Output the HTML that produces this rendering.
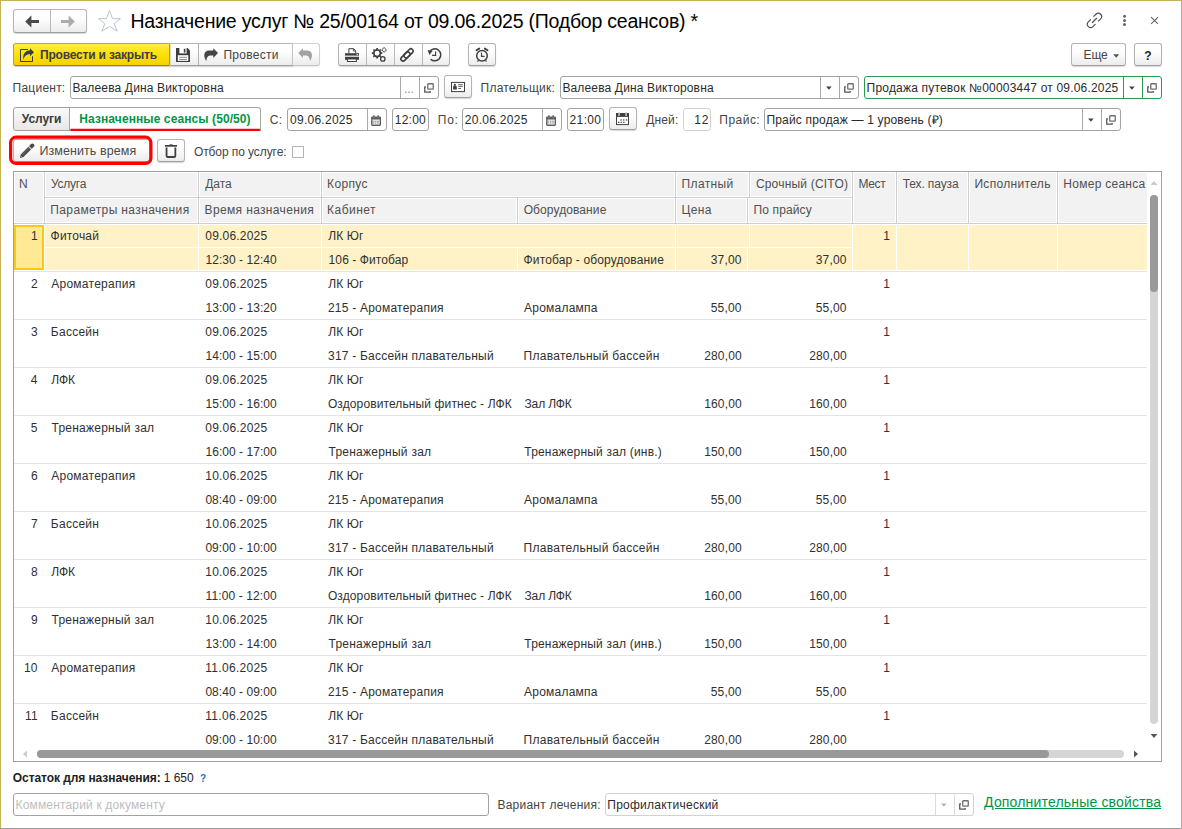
<!DOCTYPE html>
<html lang="ru"><head><meta charset="utf-8"><title>Назначение услуг</title>
<style>
html,body{margin:0;padding:0}
body{width:1182px;height:829px;overflow:hidden;background:#fff;font-family:"Liberation Sans",sans-serif;font-size:12px;color:#333}
#win{position:absolute;left:0;top:0;width:1182px;height:829px;overflow:hidden;background:#fff}
#win div,#win span,#win a,#win svg{position:absolute;box-sizing:border-box}
.t{white-space:nowrap;line-height:14px;height:14px}
.edge{background:#c4b35a}
.btn{border:1px solid #b4b4b4;border-bottom-color:#9f9f9f;border-radius:3px;background:linear-gradient(#ffffff 0%,#fdfdfd 40%,#ececec 100%);box-shadow:0 1px 1px rgba(0,0,0,.16)}
.btn .dv{top:0;width:1px;height:100%;background:#b9b9b9}
.inp{border:1px solid #a3a3a3;border-radius:3px;background:#fff;height:23px}
.inp .dv{top:0;width:1px;height:21px;background:#a9a9a9}
.inp .t{color:#2b2b2b}
.inp.ro{border-color:#d2d2d2}
.inp.gr{border-color:#2a9a4f}
.inp.gr .dv{background:#2a9a4f}
.lbl{color:#444}
#grid{left:13px;top:171px;width:1149px;height:591px;border:1px solid #a0a0a0;background:#fff;overflow:hidden}
.hc{background:#f2f2f2}
.hl{background:#cfcfcf}
.row{left:0;width:1133px;height:48px;border-bottom:1px solid #e4e4e4}
.row .sb{background:#fff2c6}

</style></head>
<body>
<div id="win">
<!-- window edges -->
<div class="edge" style="left:0;top:0;width:1182px;height:1px"></div>
<div class="edge" style="left:0;top:0;width:1px;height:829px"></div>
<div class="edge" style="left:1181px;top:0;width:1px;height:829px"></div>
<div style="left:0;top:828px;width:1181px;height:1px;background:#9a9a9a"></div>

<!-- header: navigation, title, window icons -->
<div class="btn" style="left:13px;top:9px;width:74px;height:24px">
  <div class="dv" style="left:36px"></div>
  <svg style="left:10px;top:5px" width="16" height="13" viewBox="24 15 16 13"><path d="M25.2 21.5 L31.4 15.6 V20 H39 V23 H31.4 V27.4 Z" fill="#4a4a4a"/></svg><svg style="left:46px;top:5px" width="16" height="13" viewBox="60 15 16 13"><path d="M74.8 21.5 L68.6 15.6 V20 H61 V23 H68.6 V27.4 Z" fill="#ababab"/></svg>
</div>
<svg style="left:96px;top:8px" width="27" height="26" viewBox="96 8 27 26"><path d="M109.5 10.6 L112.5 18.6 L120.4 18.7 L114.2 23.7 L117.2 31.2 L109.5 26.5 L101.8 31.2 L104.8 23.7 L98.6 18.7 L106.5 18.6 Z" fill="#fff" stroke="#bcc4cc" stroke-width="1" stroke-linejoin="miter"/></svg>
<span class="t" style="left:130.40px;top:10px;letter-spacing:-0.225px;line-height:23px;height:23px;font-size:19.5px;color:#000">Назначение услуг № 25/00164 от 09.06.2025 (Подбор сеансов) *</span>
<svg style="left:1084px;top:10px" width="22" height="22" viewBox="1084 10 22 22"><g transform="translate(1094.5 20.4) rotate(-45)" fill="none" stroke="#4d4d4d" stroke-width="1.15" stroke-linecap="round"><path d="M2.3 -3.3 H5.4 A3.3 3.3 0 0 1 5.4 3.3 H2.3"/><path d="M-2.3 -3.3 H-5.4 A3.3 3.3 0 0 0 -5.4 3.3 H-2.3"/><path d="M-3 0 H3"/></g></svg><svg style="left:1121px;top:13px" width="8" height="15" viewBox="1121 13 8 15"><circle cx="1124.5" cy="16.3" r="1.5" fill="#666"/><circle cx="1124.5" cy="20.45" r="1.5" fill="#666"/><circle cx="1124.5" cy="24.6" r="1.5" fill="#666"/></svg><svg style="left:1149px;top:15px" width="12" height="12" viewBox="1149 15 12 12"><path d="M1151.1 17.1 L1158 24 M1158 17.1 L1151.1 24" stroke="#555" stroke-width="1.05" fill="none"/></svg>

<!-- command bar -->
<div id="ybtn" style="left:13px;top:43px;width:157px;height:23px;border:1px solid #bfa700;border-top-color:#c4ad00;border-bottom-color:#9c8500;border-radius:3px 0 0 3px;background:linear-gradient(#ffee4a 0%,#ffe30c 40%,#f3d200 100%);box-shadow:0 1px 1px rgba(0,0,0,.2)">
  <svg style="left:5px;top:3px" width="17" height="17" viewBox="19 47 17 17"><path d="M28 49.5 H20.5 V61.5 H32.5 V56.2" fill="none" stroke="#3b3e4a" stroke-width="1"/><path d="M30 48.2 L34 52.2 L30 56.3 V54.1 C26.5 54.2 24.3 56 23.2 59.7 C22.9 53.5 25.5 50.4 30 50.3 Z" fill="#3b3e4a"/></svg>
  <span class="t" style="left:26.00px;top:4px;letter-spacing:-0.188px;font-weight:bold;color:#3c3d45">Провести и закрыть</span>
</div>
<div class="btn" style="left:170px;top:43px;width:123px;height:23px;border-radius:0;border-color:#b4b4b4;border-bottom-color:#9f9f9f;border-left-color:#d8d8d8;border-right-color:#c4c4c4">
  <div class="dv" style="left:27px;background:#b4b4b4"></div>
  <svg style="left:4px;top:3px" width="16" height="16" viewBox="175 47 16 16"><path d="M176 48 H187.6 L190 50.4 V62 H176 Z" fill="#3d3d3d"/><rect x="179.4" y="48" width="7.2" height="5.4" fill="#fff"/><rect x="183.8" y="48.8" width="1.3" height="3.8" fill="#3d3d3d"/><rect x="185.1" y="48.8" width="1.4" height="3.8" fill="#a9a9a9"/><rect x="177.8" y="55.2" width="10.5" height="5.7" fill="#fff"/><rect x="179.2" y="56.8" width="7.8" height="1" fill="#8c8c8c"/><rect x="179.2" y="59" width="7.8" height="1" fill="#8c8c8c"/></svg><svg style="left:32px;top:3px" width="16" height="15" viewBox="203 47 16 15"><path d="M213.3 48.3 L218 53.1 L213.3 58 V55.6 H210.6 C208 55.6 206.6 57.4 206.3 60.9 C203.4 57 203.2 50.8 209 50.6 H213.3 Z" fill="#454545"/></svg>
  <span class="t" style="left:52.40px;top:4px;letter-spacing:0.300px;color:#444">Провести</span>
</div>
<div class="btn" style="left:292px;top:43px;width:28px;height:23px;border-radius:0 3px 3px 0;border-color:#d0d0d0;border-bottom-color:#c4c4c4;border-left-color:#c4c4c4;box-shadow:0 1px 1px rgba(0,0,0,.08)">
  <svg style="left:4px;top:3px" width="16" height="15" viewBox="297 47 16 15"><path d="M303 48.3 L298.3 53.1 L303 58 V55.6 H305.7 C308.3 55.6 309.7 57.4 310 60.9 C312.9 57 313.1 50.8 307.3 50.6 H303 Z" fill="#a2a2a2"/></svg>
</div>
<div class="btn" style="left:338px;top:43px;width:112px;height:23px">
  <div class="dv" style="left:27px"></div><div class="dv" style="left:55px"></div><div class="dv" style="left:83px"></div>
  <svg style="left:5px;top:3px" width="16" height="16" viewBox="344 47 16 16"><path d="M348.9 53.4 V48.7 H353.6 L355.7 50.8 V53.4" fill="#fff" stroke="#404040" stroke-width="1"/><path d="M353.4 48.8 V51 H355.6" fill="none" stroke="#404040" stroke-width="0.9"/><rect x="345" y="53.2" width="14" height="2.4" fill="#404040"/><rect x="356.7" y="54" width="1.1" height="1" fill="#fff"/><rect x="345" y="56.8" width="14" height="3" fill="#404040"/><rect x="347.4" y="59" width="9" height="2.5" fill="#fff" stroke="#404040" stroke-width="1"/></svg><svg style="left:32px;top:3px" width="16" height="16" viewBox="371 47 16 16"><circle cx="377.1" cy="53.2" r="3.3" fill="none" stroke="#404040" stroke-width="1.7"/><g stroke="#404040" stroke-width="1.7"><path d="M377.1 48 V49.4 M377.1 57 V58.4 M371.9 53.2 H373.3 M380.9 53.2 H382.3 M373.4 49.5 L374.4 50.5 M379.8 55.9 L380.8 56.9 M373.4 56.9 L374.4 55.9 M379.8 50.5 L380.8 49.5"/></g><path d="M384.1 47.5 L386.5 49.9 L384.1 52.3 L381.7 49.9 Z" fill="#fff" stroke="#404040" stroke-width="1"/><circle cx="382.8" cy="58.9" r="2.2" fill="none" stroke="#404040" stroke-width="1.3"/></svg><svg style="left:60px;top:3px" width="16" height="16" viewBox="399 47 16 16"><g fill="none" stroke="#404040" stroke-width="1.6"><rect x="-5.5" y="-2.2" width="11" height="4.4" rx="2.2" transform="translate(408.55 53.35) rotate(-45)"/><rect x="-5.5" y="-2.2" width="11" height="4.4" rx="2.2" transform="translate(405.45 56.55) rotate(-45)"/></g></svg><svg style="left:88px;top:3px" width="16" height="16" viewBox="427 47 16 16"><path d="M429.7 51.6 A6 6 0 1 1 430.6 59.2" fill="none" stroke="#404040" stroke-width="1.5"/><path d="M427.7 50 L432.6 50.9 L429.3 55 Z" fill="#404040"/><path d="M435.6 51.5 V55.4 H432.1" fill="none" stroke="#404040" stroke-width="1.2"/></svg>
</div>
<div class="btn" style="left:468px;top:43px;width:28px;height:23px"><svg style="left:5px;top:3px" width="16" height="16" viewBox="474 47 16 16"><circle cx="482" cy="55.8" r="5.3" fill="none" stroke="#404040" stroke-width="1.5"/><path d="M481.5 52.6 V56.3 H484.6" fill="none" stroke="#404040" stroke-width="1.15"/><path d="M476.5 50.3 L479.2 48.6 M487.5 50.3 L484.8 48.6" stroke="#404040" stroke-width="1.9" stroke-linecap="round"/><path d="M478.6 60.2 L477.5 61.6 M485.4 60.2 L486.5 61.6" stroke="#404040" stroke-width="1.2"/></svg></div>
<div class="btn" style="left:1071px;top:43px;width:55px;height:23px">
  <span class="t" style="left:11.60px;top:4px;letter-spacing:-0.200px;color:#444">Еще</span>
  <svg style="left:41px;top:10px" width="7" height="4" viewBox="0 0 7 4"><path d="M0.2 0.3 H6.2 L3.2 3.8 Z" fill="#555"/></svg>
</div>
<div class="btn" style="left:1134px;top:43px;width:28px;height:23px">
  <span class="t" style="left:9.30px;top:5px;font-weight:bold;font-size:12px;color:#222">?</span>
</div>

<!-- row 3 -->
<span class="t" style="left:12.60px;top:81px;letter-spacing:0.229px;color:#444">Пациент:</span>
<div class="inp" style="left:70px;top:76px;width:369px">
  <span class="t" style="left:1.40px;top:4px;letter-spacing:0.150px;">Валеева Дина Викторовна</span>
  <div class="dv" style="left:329px"></div><div class="dv" style="left:348px"></div>
  <span class="t" style="left:333px;top:5px;color:#8a8a8a">...</span>
  <svg style="left:353px;top:6px" width="10" height="10" viewBox="0 0 10 10"><path d="M2 3.8 H0.75 V9.2 H6.2 V8" fill="none" stroke="#555" stroke-width="1.3" stroke-linejoin="round"/><rect x="3.75" y="0.75" width="5.5" height="5.3" rx="0.6" fill="#fff" stroke="#6e6e6e" stroke-width="1.3"/></svg>
</div>
<div class="btn" style="left:444px;top:75px;width:28px;height:23px"><svg style="left:5px;top:5px" width="16" height="12" viewBox="450 81 16 12"><rect x="451.5" y="82.4" width="13" height="9.2" fill="#fff" stroke="#404040" stroke-width="1"/><rect x="453.9" y="83.9" width="1.9" height="1.6" fill="#404040"/><path d="M453.1 89.5 V86.6 L453.9 85.4 H455.8 L456.8 86.6 V89.5 Z" fill="#404040"/><path d="M458.2 84.7 H462.8 M458.2 86.4 H462.8 M458.2 88.5 H461" stroke="#555" stroke-width="0.9"/></svg></div>
<span class="t" style="left:480.60px;top:81px;letter-spacing:0.210px;color:#444">Плательщик:</span>
<div class="inp" style="left:560px;top:76px;width:299px">
  <span class="t" style="left:1.40px;top:4px;letter-spacing:0.150px;">Валеева Дина Викторовна</span>
  <div class="dv" style="left:259px"></div><div class="dv" style="left:278px"></div>
  <svg style="left:265px;top:9px" width="6" height="4" viewBox="0 0 6 4"><path d="M0.1 0.4 H5.7 L2.9 3.7 Z" fill="#444"/></svg><svg style="left:283px;top:6px" width="10" height="10" viewBox="0 0 10 10"><path d="M2 3.8 H0.75 V9.2 H6.2 V8" fill="none" stroke="#555" stroke-width="1.3" stroke-linejoin="round"/><rect x="3.75" y="0.75" width="5.5" height="5.3" rx="0.6" fill="#fff" stroke="#6e6e6e" stroke-width="1.3"/></svg>
</div>
<div class="inp gr" style="left:864px;top:76px;width:298px">
  <span class="t" style="left:1.60px;top:4px;letter-spacing:0.192px;">Продажа путевок №00003447 от 09.06.2025</span>
  <div class="dv" style="left:258px"></div><div class="dv" style="left:277px"></div>
  <svg style="left:264px;top:9px" width="6" height="4" viewBox="0 0 6 4"><path d="M0.1 0.4 H5.7 L2.9 3.7 Z" fill="#444"/></svg><svg style="left:282px;top:6px" width="10" height="10" viewBox="0 0 10 10"><path d="M2 3.8 H0.75 V9.2 H6.2 V8" fill="none" stroke="#555" stroke-width="1.3" stroke-linejoin="round"/><rect x="3.75" y="0.75" width="5.5" height="5.3" rx="0.6" fill="#fff" stroke="#6e6e6e" stroke-width="1.3"/></svg>
</div>

<!-- row 4 -->
<div class="btn" style="left:13px;top:107px;width:57px;height:24px;border-radius:3px 0 0 3px;border-color:#9f9f9f;background:linear-gradient(#fafafa,#e8e8e8);box-shadow:none">
  <span class="t" style="left:7.80px;top:4px;letter-spacing:-0.080px;font-weight:bold;color:#3a3a3a">Услуги</span>
</div>
<div style="left:69px;top:107px;width:192px;height:24px;border:1px solid #a6a6a6;border-bottom:none;border-radius:0 3px 0 0;background:#fff">
  <span class="t" style="left:9.30px;top:4px;letter-spacing:0.092px;font-weight:bold;color:#009646">Назначенные сеансы (50/50)</span>
</div>
<svg style="left:68px;top:127px" width="196" height="6" viewBox="68 127 196 6"><path d="M71.2 129.9 H259.2" stroke="#ff0000" stroke-width="2.2" stroke-linecap="round" fill="none"/></svg>
<span class="t" style="left:269.70px;top:113px;letter-spacing:0.400px;color:#444">С:</span>
<div class="inp" style="left:287px;top:108px;width:100px">
  <span class="t" style="left:2.00px;top:4px;letter-spacing:0.267px;">09.06.2025</span>
  <div class="dv" style="left:79px"></div>
  <svg style="left:83px;top:6px" width="10" height="11" viewBox="0 0 10 11"><rect x="0.1" y="1.4" width="9.9" height="9.5" rx="1.3" fill="#5c5c5c"/><rect x="2.1" y="0.2" width="1.7" height="2.6" rx="0.7" fill="#5c5c5c"/><rect x="6.3" y="0.2" width="1.7" height="2.6" rx="0.7" fill="#5c5c5c"/><rect x="2.5" y="1.6" width="0.9" height="1.6" fill="#9a9a9a"/><rect x="6.7" y="1.6" width="0.9" height="1.6" fill="#9a9a9a"/><rect x="1.4" y="4.5" width="7.3" height="5.1" fill="#efefef"/><path d="M1.4 6.3 H8.7 M1.4 8 H8.7" stroke="#7a7a7a" stroke-width="0.8" stroke-dasharray="1.6 0.8"/></svg>
</div>
<div class="inp" style="left:392px;top:108px;width:37px"><span class="t" style="left:1.80px;top:4px;letter-spacing:0.225px;">12:00</span></div>
<span class="t" style="left:437.80px;top:113px;letter-spacing:0.750px;color:#444">По:</span>
<div class="inp" style="left:462px;top:108px;width:100px">
  <span class="t" style="left:1.70px;top:4px;letter-spacing:0.300px;">20.06.2025</span>
  <div class="dv" style="left:79px"></div>
  <svg style="left:83px;top:6px" width="10" height="11" viewBox="0 0 10 11"><rect x="0.1" y="1.4" width="9.9" height="9.5" rx="1.3" fill="#5c5c5c"/><rect x="2.1" y="0.2" width="1.7" height="2.6" rx="0.7" fill="#5c5c5c"/><rect x="6.3" y="0.2" width="1.7" height="2.6" rx="0.7" fill="#5c5c5c"/><rect x="2.5" y="1.6" width="0.9" height="1.6" fill="#9a9a9a"/><rect x="6.7" y="1.6" width="0.9" height="1.6" fill="#9a9a9a"/><rect x="1.4" y="4.5" width="7.3" height="5.1" fill="#efefef"/><path d="M1.4 6.3 H8.7 M1.4 8 H8.7" stroke="#7a7a7a" stroke-width="0.8" stroke-dasharray="1.6 0.8"/></svg>
</div>
<div class="inp" style="left:567px;top:108px;width:37px"><span class="t" style="left:1.60px;top:4px;letter-spacing:0.350px;">21:00</span></div>
<div class="btn" style="left:609px;top:107px;width:28px;height:23px"><svg style="left:5px;top:3px" width="15" height="15" viewBox="615 111 15 15"><rect x="616.5" y="113.6" width="12" height="11" fill="#fff" stroke="#404040" stroke-width="1"/><rect x="616" y="113.1" width="13" height="3.8" fill="#404040"/><rect x="618.3" y="112.3" width="1.6" height="3.7" rx="0.6" fill="#bdbdbd"/><rect x="625.3" y="112.3" width="1.6" height="3.7" rx="0.6" fill="#bdbdbd"/><g fill="#404040"><rect x="620.4" y="119.3" width="1.3" height="1.3"/><rect x="623.1" y="119.3" width="1.3" height="1.3"/><rect x="625.9" y="119.3" width="1.3" height="1.3"/><rect x="618" y="121.7" width="1.3" height="1.3"/><rect x="620.6" y="121.7" width="1.3" height="1.3"/><rect x="623.2" y="121.7" width="1.3" height="1.3"/></g></svg></div>
<span class="t" style="left:646.30px;top:113px;letter-spacing:0.125px;color:#444">Дней:</span>
<div class="inp ro" style="left:683px;top:108px;width:28px"><span class="t" style="left:10.30px;top:4px;letter-spacing:0.800px;">12</span></div>
<span class="t" style="left:719.30px;top:113px;letter-spacing:0.480px;color:#444">Прайс:</span>
<div class="inp" style="left:764px;top:108px;width:357px">
  <span class="t" style="left:1.40px;top:4px;letter-spacing:0.189px;">Прайс продаж — 1 уровень (₽)</span>
  <div class="dv" style="left:317px"></div><div class="dv" style="left:336px"></div>
  <svg style="left:323px;top:9px" width="6" height="4" viewBox="0 0 6 4"><path d="M0.1 0.4 H5.7 L2.9 3.7 Z" fill="#444"/></svg><svg style="left:341px;top:6px" width="10" height="10" viewBox="0 0 10 10"><path d="M2 3.8 H0.75 V9.2 H6.2 V8" fill="none" stroke="#555" stroke-width="1.3" stroke-linejoin="round"/><rect x="3.75" y="0.75" width="5.5" height="5.3" rx="0.6" fill="#fff" stroke="#6e6e6e" stroke-width="1.3"/></svg>
</div>

<!-- row 5 -->
<div class="btn" style="left:13px;top:139px;width:137px;height:23px">
  <svg style="left:5px;top:3px" width="16" height="16" viewBox="19 143 16 16"><g transform="translate(20.1 157.7) rotate(-45)"><path d="M0 0 L2.8 -1.9 H13.6 V1.9 H2.8 Z" fill="#4a4a4a"/><path d="M0 0 L2.2 -1.4 V1.4 Z" fill="#8a8a8a"/><path d="M0 0 L1 -0.65 V0.65 Z" fill="#4a4a4a"/><rect x="13.6" y="-1.9" width="1" height="3.8" fill="#c4c4c4"/><path d="M14.6 -1.9 H17.4 A1.9 1.9 0 0 1 17.4 1.9 H14.6 Z" fill="#4a4a4a"/><path d="M3.5 -0.6 H13" stroke="#9c9c9c" stroke-width="0.6" stroke-dasharray="1 0.7"/></g></svg>
  <span class="t" style="left:25.40px;top:4px;letter-spacing:0.085px;line-height:15px;height:15px;color:#4a4a4a;font-size:12.5px">Изменить время</span>
</div>
<svg style="left:6px;top:132px" width="152" height="37" viewBox="6 132 152 37"><rect x="10.6" y="137.2" width="140.3" height="26.2" rx="5.4" fill="none" stroke="#ff0000" stroke-width="3.2"/></svg>
<div class="btn" style="left:157px;top:139px;width:28px;height:23px"><svg style="left:6px;top:3px" width="14" height="16" viewBox="164 143 14 16"><rect x="165" y="145" width="12" height="1.7" fill="#404040"/><path d="M168.6 145.3 Q171 143.2 173.4 145.3 Z" fill="#404040"/><path d="M166.55 147.6 V155.7 a1.3 1.3 0 0 0 1.3 1.3 H174.05 a1.3 1.3 0 0 0 1.3 -1.3 V147.6" fill="none" stroke="#404040" stroke-width="1.8"/></svg></div>
<span class="t" style="left:193.90px;top:145px;letter-spacing:-0.080px;color:#444">Отбор по услуге:</span>
<div style="left:292px;top:146px;width:12px;height:12px;border:1px solid #b4b4b4;background:#fff"></div>
<!-- table -->
<div id="grid">
<div class="hc" style="left:1px;top:1px;width:28px;height:49px"><span class="t" style="left:4.00px;top:4px;color:#505050">N</span></div>
<div class="hc" style="left:32px;top:1px;width:151px;height:23px"><span class="t" style="left:4.90px;top:4px;letter-spacing:-0.220px;color:#505050">Услуга</span></div>
<div class="hc" style="left:32px;top:27px;width:151px;height:23px"><span class="t" style="left:4.30px;top:4px;letter-spacing:0.374px;color:#505050">Параметры назначения</span></div>
<div class="hc" style="left:186px;top:1px;width:120px;height:23px"><span class="t" style="left:5.30px;top:4px;letter-spacing:-0.067px;color:#505050">Дата</span></div>
<div class="hc" style="left:186px;top:27px;width:120px;height:23px"><span class="t" style="left:4.60px;top:4px;letter-spacing:0.353px;color:#505050">Время назначения</span></div>
<div class="hc" style="left:309px;top:1px;width:351px;height:23px"><span class="t" style="left:4.10px;top:4px;letter-spacing:0.320px;color:#505050">Корпус</span></div>
<div class="hc" style="left:309px;top:27px;width:193px;height:23px"><span class="t" style="left:4.10px;top:4px;letter-spacing:0.450px;color:#505050">Кабинет</span></div>
<div class="hc" style="left:505px;top:27px;width:155px;height:23px"><span class="t" style="left:4.70px;top:4px;letter-spacing:0.091px;color:#505050">Оборудование</span></div>
<div class="hc" style="left:663px;top:1px;width:71px;height:23px"><span class="t" style="left:4.60px;top:4px;letter-spacing:0.333px;color:#505050">Платный</span></div>
<div class="hc" style="left:663px;top:27px;width:69px;height:23px"><span class="t" style="left:4.60px;top:4px;letter-spacing:0.333px;color:#505050">Цена</span></div>
<div class="hc" style="left:737px;top:1px;width:100px;height:23px"><span class="t" style="left:4.90px;top:4px;letter-spacing:0.192px;color:#505050">Срочный (CITO)</span></div>
<div class="hc" style="left:735px;top:27px;width:102px;height:23px"><span class="t" style="left:4.50px;top:4px;letter-spacing:0.125px;color:#505050">По прайсу</span></div>
<div class="hc" style="left:840px;top:1px;width:41px;height:49px"><span class="t" style="left:4.50px;top:4px;letter-spacing:-0.367px;color:#505050">Мест</span></div>
<div class="hc" style="left:884px;top:1px;width:69px;height:49px"><span class="t" style="left:4.70px;top:4px;letter-spacing:-0.111px;color:#505050">Тех. пауза</span></div>
<div class="hc" style="left:956px;top:1px;width:86px;height:49px"><span class="t" style="left:4.40px;top:4px;letter-spacing:0.330px;color:#505050">Исполнитель</span></div>
<div class="hc" style="left:1045px;top:1px;width:88px;height:49px"><span class="t" style="left:4.30px;top:4px;letter-spacing:0.273px;color:#505050">Номер сеанса</span></div>
<div class="hl" style="left:30px;top:0px;width:1px;height:52px"></div>
<div class="hl" style="left:184px;top:0px;width:1px;height:52px"></div>
<div class="hl" style="left:307px;top:0px;width:1px;height:52px"></div>
<div class="hl" style="left:661px;top:0px;width:1px;height:52px"></div>
<div class="hl" style="left:838px;top:0px;width:1px;height:52px"></div>
<div class="hl" style="left:882px;top:0px;width:1px;height:52px"></div>
<div class="hl" style="left:954px;top:0px;width:1px;height:52px"></div>
<div class="hl" style="left:1043px;top:0px;width:1px;height:52px"></div>
<div class="hl" style="left:735px;top:0px;width:1px;height:26px"></div>
<div class="hl" style="left:733px;top:25px;width:1px;height:27px"></div>
<div class="hl" style="left:503px;top:26px;width:1px;height:26px"></div>
<div class="hl" style="left:31px;top:25px;width:807px;height:1px"></div>
<div class="hl" style="left:0px;top:51px;width:1133px;height:1px"></div>
<div class="row" style="top:52px"><div style="left:0;top:1px;width:30px;height:45px;border:2px solid #f9c716;background:#ffe994"></div><div class="sb" style="left:31px;top:1px;width:153px;height:22px"></div><div class="sb" style="left:31px;top:24px;width:153px;height:22px"></div><div class="sb" style="left:185px;top:1px;width:122px;height:22px"></div><div class="sb" style="left:185px;top:24px;width:122px;height:22px"></div><div class="sb" style="left:308px;top:1px;width:353px;height:22px"></div><div class="sb" style="left:308px;top:24px;width:195px;height:22px"></div><div class="sb" style="left:504px;top:24px;width:157px;height:22px"></div><div class="sb" style="left:662px;top:1px;width:73px;height:22px"></div><div class="sb" style="left:662px;top:24px;width:71px;height:22px"></div><div class="sb" style="left:736px;top:1px;width:102px;height:22px"></div><div class="sb" style="left:734px;top:24px;width:104px;height:22px"></div><div class="sb" style="left:839px;top:1px;width:43px;height:45px"></div><div class="sb" style="left:883px;top:1px;width:71px;height:45px"></div><div class="sb" style="left:955px;top:1px;width:88px;height:45px"></div><div class="sb" style="left:1044px;top:1px;width:89px;height:45px"></div><span class="t" style="left:16.90px;top:5px;color:#303030">1</span><span class="t" style="left:36.60px;top:5px;letter-spacing:0.183px;color:#303030">Фиточай</span><span class="t" style="left:191.30px;top:5px;letter-spacing:0.200px;color:#303030">09.06.2025</span><span class="t" style="left:191.60px;top:29px;letter-spacing:0.025px;color:#303030">12:30 - 12:40</span><span class="t" style="left:314.20px;top:5px;letter-spacing:0.150px;color:#303030">ЛК Юг</span><span class="t" style="left:314.60px;top:29px;letter-spacing:0.092px;color:#303030">106 - Фитобар</span><span class="t" style="left:509.60px;top:29px;letter-spacing:0.133px;color:#303030">Фитобар - оборудование</span><span class="t" style="left:696.80px;top:29px;color:#303030;letter-spacing:0.15px">37,00</span><span class="t" style="left:801.80px;top:29px;color:#303030;letter-spacing:0.15px">37,00</span><span class="t" style="left:869.20px;top:5px;color:#303030">1</span></div>
<div class="row" style="top:100px"><span class="t" style="left:16.90px;top:5px;color:#303030">2</span><span class="t" style="left:37.20px;top:5px;letter-spacing:0.264px;color:#303030">Ароматерапия</span><span class="t" style="left:191.30px;top:5px;letter-spacing:0.200px;color:#303030">09.06.2025</span><span class="t" style="left:191.60px;top:29px;letter-spacing:0.025px;color:#303030">13:00 - 13:20</span><span class="t" style="left:314.20px;top:5px;letter-spacing:0.150px;color:#303030">ЛК Юг</span><span class="t" style="left:313.90px;top:29px;letter-spacing:0.229px;color:#303030">215 - Ароматерапия</span><span class="t" style="left:510.00px;top:29px;letter-spacing:0.233px;color:#303030">Аромалампа</span><span class="t" style="left:696.80px;top:29px;color:#303030;letter-spacing:0.15px">55,00</span><span class="t" style="left:801.80px;top:29px;color:#303030;letter-spacing:0.15px">55,00</span><span class="t" style="left:869.20px;top:5px;color:#303030">1</span></div>
<div class="row" style="top:148px"><span class="t" style="left:16.90px;top:5px;color:#303030">3</span><span class="t" style="left:36.80px;top:5px;letter-spacing:0.267px;color:#303030">Бассейн</span><span class="t" style="left:191.30px;top:5px;letter-spacing:0.200px;color:#303030">09.06.2025</span><span class="t" style="left:191.60px;top:29px;letter-spacing:0.025px;color:#303030">14:00 - 15:00</span><span class="t" style="left:314.20px;top:5px;letter-spacing:0.150px;color:#303030">ЛК Юг</span><span class="t" style="left:314.00px;top:29px;letter-spacing:0.216px;color:#303030">317 - Бассейн плавательный</span><span class="t" style="left:509.60px;top:29px;letter-spacing:0.279px;color:#303030">Плавательный бассейн</span><span class="t" style="left:690.20px;top:29px;color:#303030;letter-spacing:0.15px">280,00</span><span class="t" style="left:795.20px;top:29px;color:#303030;letter-spacing:0.15px">280,00</span><span class="t" style="left:869.20px;top:5px;color:#303030">1</span></div>
<div class="row" style="top:196px"><span class="t" style="left:16.70px;top:5px;color:#303030">4</span><span class="t" style="left:37.20px;top:5px;color:#303030">ЛФК</span><span class="t" style="left:191.30px;top:5px;letter-spacing:0.200px;color:#303030">09.06.2025</span><span class="t" style="left:191.60px;top:29px;letter-spacing:0.025px;color:#303030">15:00 - 16:00</span><span class="t" style="left:314.20px;top:5px;letter-spacing:0.150px;color:#303030">ЛК Юг</span><span class="t" style="left:313.90px;top:29px;letter-spacing:0.115px;color:#303030">Оздоровительный фитнес - ЛФК</span><span class="t" style="left:510.50px;top:29px;letter-spacing:-0.133px;color:#303030">Зал ЛФК</span><span class="t" style="left:690.20px;top:29px;color:#303030;letter-spacing:0.15px">160,00</span><span class="t" style="left:795.20px;top:29px;color:#303030;letter-spacing:0.15px">160,00</span><span class="t" style="left:869.20px;top:5px;color:#303030">1</span></div>
<div class="row" style="top:244px"><span class="t" style="left:16.80px;top:5px;color:#303030">5</span><span class="t" style="left:37.50px;top:5px;letter-spacing:0.243px;color:#303030">Тренажерный зал</span><span class="t" style="left:191.30px;top:5px;letter-spacing:0.200px;color:#303030">09.06.2025</span><span class="t" style="left:191.60px;top:29px;letter-spacing:0.025px;color:#303030">16:00 - 17:00</span><span class="t" style="left:314.20px;top:5px;letter-spacing:0.150px;color:#303030">ЛК Юг</span><span class="t" style="left:314.50px;top:29px;letter-spacing:0.243px;color:#303030">Тренажерный зал</span><span class="t" style="left:510.30px;top:29px;letter-spacing:0.186px;color:#303030">Тренажерный зал (инв.)</span><span class="t" style="left:690.20px;top:29px;color:#303030;letter-spacing:0.15px">150,00</span><span class="t" style="left:795.20px;top:29px;color:#303030;letter-spacing:0.15px">150,00</span><span class="t" style="left:869.20px;top:5px;color:#303030">1</span></div>
<div class="row" style="top:292px"><span class="t" style="left:16.90px;top:5px;color:#303030">6</span><span class="t" style="left:37.20px;top:5px;letter-spacing:0.264px;color:#303030">Ароматерапия</span><span class="t" style="left:191.30px;top:5px;letter-spacing:0.200px;color:#303030">10.06.2025</span><span class="t" style="left:191.40px;top:29px;letter-spacing:0.042px;color:#303030">08:40 - 09:00</span><span class="t" style="left:314.20px;top:5px;letter-spacing:0.150px;color:#303030">ЛК Юг</span><span class="t" style="left:313.90px;top:29px;letter-spacing:0.229px;color:#303030">215 - Ароматерапия</span><span class="t" style="left:510.00px;top:29px;letter-spacing:0.233px;color:#303030">Аромалампа</span><span class="t" style="left:696.80px;top:29px;color:#303030;letter-spacing:0.15px">55,00</span><span class="t" style="left:801.80px;top:29px;color:#303030;letter-spacing:0.15px">55,00</span><span class="t" style="left:869.20px;top:5px;color:#303030">1</span></div>
<div class="row" style="top:340px"><span class="t" style="left:16.90px;top:5px;color:#303030">7</span><span class="t" style="left:36.80px;top:5px;letter-spacing:0.267px;color:#303030">Бассейн</span><span class="t" style="left:191.30px;top:5px;letter-spacing:0.200px;color:#303030">10.06.2025</span><span class="t" style="left:191.40px;top:29px;letter-spacing:0.042px;color:#303030">09:00 - 10:00</span><span class="t" style="left:314.20px;top:5px;letter-spacing:0.150px;color:#303030">ЛК Юг</span><span class="t" style="left:314.00px;top:29px;letter-spacing:0.216px;color:#303030">317 - Бассейн плавательный</span><span class="t" style="left:509.60px;top:29px;letter-spacing:0.279px;color:#303030">Плавательный бассейн</span><span class="t" style="left:690.20px;top:29px;color:#303030;letter-spacing:0.15px">280,00</span><span class="t" style="left:795.20px;top:29px;color:#303030;letter-spacing:0.15px">280,00</span><span class="t" style="left:869.20px;top:5px;color:#303030">1</span></div>
<div class="row" style="top:388px"><span class="t" style="left:16.90px;top:5px;color:#303030">8</span><span class="t" style="left:37.20px;top:5px;color:#303030">ЛФК</span><span class="t" style="left:191.30px;top:5px;letter-spacing:0.200px;color:#303030">10.06.2025</span><span class="t" style="left:191.60px;top:29px;letter-spacing:0.100px;color:#303030">11:00 - 12:00</span><span class="t" style="left:314.20px;top:5px;letter-spacing:0.150px;color:#303030">ЛК Юг</span><span class="t" style="left:313.90px;top:29px;letter-spacing:0.115px;color:#303030">Оздоровительный фитнес - ЛФК</span><span class="t" style="left:510.50px;top:29px;letter-spacing:-0.133px;color:#303030">Зал ЛФК</span><span class="t" style="left:690.20px;top:29px;color:#303030;letter-spacing:0.15px">160,00</span><span class="t" style="left:795.20px;top:29px;color:#303030;letter-spacing:0.15px">160,00</span><span class="t" style="left:869.20px;top:5px;color:#303030">1</span></div>
<div class="row" style="top:436px"><span class="t" style="left:16.90px;top:5px;color:#303030">9</span><span class="t" style="left:37.50px;top:5px;letter-spacing:0.243px;color:#303030">Тренажерный зал</span><span class="t" style="left:191.30px;top:5px;letter-spacing:0.200px;color:#303030">10.06.2025</span><span class="t" style="left:191.60px;top:29px;letter-spacing:0.025px;color:#303030">13:00 - 14:00</span><span class="t" style="left:314.20px;top:5px;letter-spacing:0.150px;color:#303030">ЛК Юг</span><span class="t" style="left:314.50px;top:29px;letter-spacing:0.243px;color:#303030">Тренажерный зал</span><span class="t" style="left:510.30px;top:29px;letter-spacing:0.186px;color:#303030">Тренажерный зал (инв.)</span><span class="t" style="left:690.20px;top:29px;color:#303030;letter-spacing:0.15px">150,00</span><span class="t" style="left:795.20px;top:29px;color:#303030;letter-spacing:0.15px">150,00</span><span class="t" style="left:869.20px;top:5px;color:#303030">1</span></div>
<div class="row" style="top:484px"><span class="t" style="left:10.10px;top:5px;color:#303030">10</span><span class="t" style="left:37.20px;top:5px;letter-spacing:0.264px;color:#303030">Ароматерапия</span><span class="t" style="left:191.30px;top:5px;letter-spacing:0.289px;color:#303030">11.06.2025</span><span class="t" style="left:191.40px;top:29px;letter-spacing:0.042px;color:#303030">08:40 - 09:00</span><span class="t" style="left:314.20px;top:5px;letter-spacing:0.150px;color:#303030">ЛК Юг</span><span class="t" style="left:313.90px;top:29px;letter-spacing:0.229px;color:#303030">215 - Ароматерапия</span><span class="t" style="left:510.00px;top:29px;letter-spacing:0.233px;color:#303030">Аромалампа</span><span class="t" style="left:696.80px;top:29px;color:#303030;letter-spacing:0.15px">55,00</span><span class="t" style="left:801.80px;top:29px;color:#303030;letter-spacing:0.15px">55,00</span><span class="t" style="left:869.20px;top:5px;color:#303030">1</span></div>
<div class="row" style="top:532px"><span class="t" style="left:11.10px;top:5px;color:#303030">11</span><span class="t" style="left:36.80px;top:5px;letter-spacing:0.267px;color:#303030">Бассейн</span><span class="t" style="left:191.30px;top:5px;letter-spacing:0.289px;color:#303030">11.06.2025</span><span class="t" style="left:191.40px;top:29px;letter-spacing:0.042px;color:#303030">09:00 - 10:00</span><span class="t" style="left:314.20px;top:5px;letter-spacing:0.150px;color:#303030">ЛК Юг</span><span class="t" style="left:314.00px;top:29px;letter-spacing:0.216px;color:#303030">317 - Бассейн плавательный</span><span class="t" style="left:509.60px;top:29px;letter-spacing:0.279px;color:#303030">Плавательный бассейн</span><span class="t" style="left:690.20px;top:29px;color:#303030;letter-spacing:0.15px">280,00</span><span class="t" style="left:795.20px;top:29px;color:#303030;letter-spacing:0.15px">280,00</span><span class="t" style="left:869.20px;top:5px;color:#303030">1</span></div>
<div style="left:1133px;top:0;width:14px;height:589px;background:#fff"></div>
<div style="left:0;top:575px;width:1147px;height:14px;background:#fff"></div>
<svg style="left:1136px;top:8px" width="8" height="6" viewBox="0 0 8 6"><path d="M4 1 L7.4 5 H0.6 Z" fill="#c9c9c9"/></svg>
<div style="left:1136px;top:23px;width:8px;height:529px;border-radius:4px;background:#d5d5d5"></div>
<div style="left:1136px;top:23px;width:8px;height:97px;border-radius:4px;background:#999"></div>
<svg style="left:1136px;top:561px" width="8" height="6" viewBox="0 0 8 6"><path d="M4 5 L7.4 1 H0.6 Z" fill="#555"/></svg>
<svg style="left:8px;top:578px" width="6" height="8" viewBox="0 0 6 8"><path d="M1 4 L5 0.6 V7.4 Z" fill="#c9c9c9"/></svg>
<div style="left:23px;top:578px;width:1087px;height:8px;border-radius:4px;background:#d5d5d5"></div>
<div style="left:23px;top:578px;width:1012px;height:8px;border-radius:4px;background:#999"></div>
<svg style="left:1119px;top:578px" width="6" height="8" viewBox="0 0 6 8"><path d="M5 4 L1 0.6 V7.4 Z" fill="#555"/></svg>
</div>
<!-- footer -->
<span class="t" style="left:12.80px;top:771px;letter-spacing:-0.073px;font-weight:bold;color:#222">Остаток для назначения:</span>
<span class="t" style="left:163.70px;top:771px;color:#222">1 650</span>
<span class="t" style="left:199.90px;top:773px;line-height:12px;height:12px;color:#1e73b8;font-weight:bold;font-size:10px">?</span>
<div class="inp" style="left:13px;top:793px;width:476px"><span class="t" style="left:1.50px;top:4px;letter-spacing:0.168px;color:#bdbdbd">Комментарий к документу</span></div>
<span class="t" style="left:497.40px;top:798px;letter-spacing:0.240px;color:#444">Вариант лечения:</span>
<div class="inp ro" style="left:605px;top:793px;width:369px">
  <span class="t" style="left:1.30px;top:4px;letter-spacing:0.240px;">Профилактический</span>
  <div class="dv" style="left:329px;background:#dcdcdc"></div><div class="dv" style="left:348px;background:#dcdcdc"></div>
  <svg style="left:335px;top:9px" width="6" height="4" viewBox="0 0 6 4"><path d="M0.1 0.4 H5.7 L2.9 3.7 Z" fill="#b4b4b4"/></svg><svg style="left:353px;top:6px" width="10" height="10" viewBox="0 0 10 10"><path d="M2 3.8 H0.75 V9.2 H6.2 V8" fill="none" stroke="#555" stroke-width="1.3" stroke-linejoin="round"/><rect x="3.75" y="0.75" width="5.5" height="5.3" rx="0.6" fill="#fff" stroke="#6e6e6e" stroke-width="1.3"/></svg>
</div>
<a class="t" style="left:984.10px;top:794px;letter-spacing:0.173px;line-height:16px;height:16px;font-size:14px;color:#009646;text-decoration:underline">Дополнительные свойства</a>
</div>
</body></html>
